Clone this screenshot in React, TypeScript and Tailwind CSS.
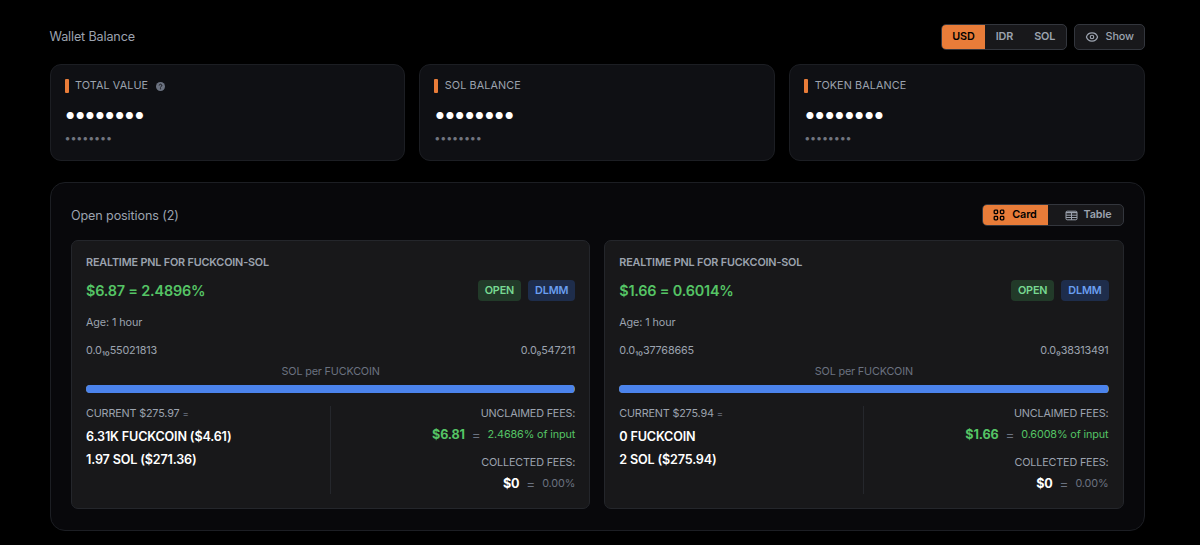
import type { ReactNode } from "react";

type Position = {
  pnl: string;
  lowExp: string;
  low: string;
  highExp: string;
  high: string;
  current: string;
  base: string;
  quote: string;
  fees: string;
  feesPct: string;
};

const positions: Position[] = [
  {
    pnl: "$6.87 = 2.4896%",
    lowExp: "₁₀",
    low: "55021813",
    highExp: "₉",
    high: "547211",
    current: "$275.97",
    base: "6.31K FUCKCOIN ($4.61)",
    quote: "1.97 SOL ($271.36)",
    fees: "$6.81",
    feesPct: "2.4686% of input",
  },
  {
    pnl: "$1.66 = 0.6014%",
    lowExp: "₁₀",
    low: "37768665",
    highExp: "₉",
    high: "38313491",
    current: "$275.94",
    base: "0 FUCKCOIN",
    quote: "2 SOL ($275.94)",
    fees: "$1.66",
    feesPct: "0.6008% of input",
  },
];

function BalanceCard({ title, children }: { title: string; children?: ReactNode }) {
  return (
    <div className="h-[96.5px] rounded-[11px] border border-[#1c1e23] bg-[#0f1014] px-[14px] pt-[14px]">
      <div className="flex h-[14px] items-center">
        <div className="h-[14px] w-[4px] rounded-[1px] bg-[#e87c39]" />
        <span className="ml-[6.5px] text-[10.8px] leading-[14px] tracking-[0.1px] text-[#9ca3af]">{title}</span>
        {children}
      </div>
      <div className="mt-[11px] h-[20px] text-[22.5px] leading-[20px] font-semibold tracking-[-1.45px] text-white">••••••••</div>
      <div className="mt-[8px] h-[14px] text-[10.8px] leading-[14px] tracking-[-0.15px] text-[#71757f]">••••••••</div>
    </div>
  );
}

function HelpIcon() {
  return (
    <svg viewBox="0 0 16 16" className="ml-[8px] size-[9px]">
      <circle cx="8" cy="8" r="8" fill="#6b7280" />
      <path d="M5.7 6.2a2.3 2.3 0 1 1 3.6 1.9c-.8.5-1.3.8-1.3 1.6" fill="none" stroke="#0f1014" strokeWidth="1.7" />
      <circle cx="8" cy="12" r="1.1" fill="#0f1014" />
    </svg>
  );
}

function EyeIcon() {
  return (
    <svg viewBox="0 0 24 24" className="size-[14px]" fill="none" stroke="currentColor" strokeWidth="2" strokeLinecap="round" strokeLinejoin="round">
      <path d="M2.46 12C3.73 7.94 7.52 5 12 5s8.27 2.94 9.54 7c-1.27 4.06-5.06 7-9.54 7s-8.27-2.94-9.54-7z" />
      <circle cx="12" cy="12" r="3" />
    </svg>
  );
}

function GridIcon() {
  return (
    <svg viewBox="0 0 12 12" className="size-[12px]" fill="none" stroke="currentColor" strokeWidth="1.3">
      <rect x="1.2" y="1.2" width="3.4" height="3.4" rx="0.8" />
      <rect x="7.4" y="1.2" width="3.4" height="3.4" rx="0.8" />
      <rect x="1.2" y="7.4" width="3.4" height="3.4" rx="0.8" />
      <rect x="7.4" y="7.4" width="3.4" height="3.4" rx="0.8" />
    </svg>
  );
}

function TableIcon() {
  return (
    <svg viewBox="0 0 13 11" className="h-[11px] w-[13px]" fill="none" stroke="currentColor" strokeWidth="1">
      <rect x="1" y="1.2" width="11" height="8.6" rx="1.2" />
      <path d="M1 2.6h11" strokeWidth="1.4" />
      <path d="M1 5.2h11M1 7.5h11M6.5 3v6.8" />
    </svg>
  );
}

function PositionCard({ p }: { p: Position }) {
  return (
    <div className="h-[269px] rounded-[7px] border border-[#24262b] bg-[#18181a] px-[14px] pt-[15px] tracking-[-0.16px]">
      <div className="h-[14px] text-[10.8px] leading-[14px] font-semibold text-[#9ca3af]">REALTIME PNL FOR FUCKCOIN-SOL</div>
      <div className="mt-[10px] flex h-[21px] items-center">
        <span className="flex-1 text-[14.4px] leading-[20px] font-semibold tracking-[-0.18px] text-[#55c465]">{p.pnl}</span>
        <span className="h-[21px] rounded-[4px] bg-[#223a29] px-[7px] text-[10.8px] leading-[21px] font-semibold text-[#78d992]">OPEN</span>
        <span className="ml-[7px] h-[21px] rounded-[4px] bg-[#1e2d4b] px-[7px] text-[10.8px] leading-[21px] font-semibold text-[#6b9ff0]">DLMM</span>
      </div>
      <div className="mt-[15px] h-[14px] text-[10.8px] leading-[14px] tracking-[-0.1px] text-[#9ca3af]">Age: 1 hour</div>
      <div className="mt-[14px] flex h-[14px] justify-between text-[10.8px] leading-[14px] text-[#9ca3af]">
        <span>0.0{p.lowExp}{p.low}</span>
        <span>0.0{p.highExp}{p.high}</span>
      </div>
      <div className="mt-[7px] h-[14px] text-center text-[10.8px] leading-[14px] text-[#6b7280]">SOL per FUCKCOIN</div>
      <div className="mt-[6px] h-[8px] overflow-hidden rounded-full bg-[#8a8f78]">
        <div className="h-full w-[99.8%] bg-[#4b83ec]" />
      </div>
      <div className="mt-[13px] grid h-[88px] grid-cols-2">
        <div className="border-r border-[#25272c] pt-px">
          <div className="h-[14px] text-[10.8px] leading-[14px] text-[#9ca3af]">
            CURRENT {p.current} <span className="text-[9.5px] text-[#6b7280]">=</span>
          </div>
          <div className="mt-[6px] h-[20px] text-[12.6px] leading-[20px] font-semibold text-white">{p.base}</div>
          <div className="mt-[3px] h-[20px] text-[12.6px] leading-[20px] font-semibold text-white">{p.quote}</div>
        </div>
        <div className="pt-px text-right text-[10.8px] leading-[14px] text-[#9ca3af]">
          <div className="h-[14px]">UNCLAIMED FEES:</div>
          <div className="mt-[4px] flex h-[20px] items-center justify-end gap-[7px]">
            <span className="text-[12.6px] font-bold text-[#55c465]">{p.fees}</span>
            <span className="text-[13.5px] text-[#6b7280]">=</span>
            <span className="tracking-[-0.11px] text-[#55c465]">{p.feesPct}</span>
          </div>
          <div className="mt-[11px] h-[14px]">COLLECTED FEES:</div>
          <div className="mt-[4px] flex h-[20px] items-center justify-end gap-[7px]">
            <span className="text-[12.6px] font-bold text-white">$0</span>
            <span className="text-[13.5px] text-[#6b7280]">=</span>
            <span className="tracking-[-0.1px] text-[#6b7280]">0.00%</span>
          </div>
        </div>
      </div>
    </div>
  );
}

export default function App() {
  return (
    <div className="h-[545px] overflow-hidden bg-black pt-[23.5px] pr-[55px] pl-[49.5px] font-['Inter',sans-serif]">
      <div className="flex h-[26.5px] items-center justify-between">
        <h2 className="pt-[2px] text-[12.6px] tracking-[-0.14px] text-[#9ca3af]">Wallet Balance</h2>
        <div className="flex h-full gap-[7px] text-[10.8px] tracking-[-0.1px] text-[#9ca3af]">
          <div className="flex w-[125.5px] overflow-hidden rounded-[5px] border border-[#33363d] bg-[#18181b] font-semibold">
            <button className="w-[43px] bg-[#e87c39] text-black">USD</button>
            <button className="w-[39px]">IDR</button>
            <button className="flex-1">SOL</button>
          </div>
          <button className="flex w-[71.5px] items-center justify-center gap-[7px] rounded-[5px] border border-[#33363d] bg-[#18181b] font-medium">
            <EyeIcon />
            Show
          </button>
        </div>
      </div>
      <div className="mt-[14px] grid grid-cols-3 gap-[14px]">
        <BalanceCard title="TOTAL VALUE">
          <HelpIcon />
        </BalanceCard>
        <BalanceCard title="SOL BALANCE" />
        <BalanceCard title="TOKEN BALANCE" />
      </div>
      <section className="mt-[21.5px] h-[348.5px] rounded-[15px] border border-[#1c1e23] bg-[#08080b] px-[20.5px] pt-[21px]">
        <div className="flex h-[22px] items-center justify-between">
          <h2 className="pt-[2px] text-[12.6px] tracking-[-0.12px] text-[#9ca3af]">Open positions (2)</h2>
          <div className="flex h-full w-[142px] overflow-hidden rounded-[5px] border border-[#33363d] bg-[#18181b] text-[10.8px] font-semibold tracking-[-0.1px] text-[#9ca3af]">
            <button className="flex w-[65px] items-center justify-center gap-[7px] bg-[#e87c39] text-black">
              <GridIcon />
              Card
            </button>
            <button className="flex flex-1 items-center justify-center gap-[6px] pl-[6px]">
              <TableIcon />
              Table
            </button>
          </div>
        </div>
        <div className="mt-[14px] grid grid-cols-2 gap-[14px]">
          {positions.map((p) => (
            <PositionCard key={p.pnl} p={p} />
          ))}
        </div>
      </section>
    </div>
  );
}
